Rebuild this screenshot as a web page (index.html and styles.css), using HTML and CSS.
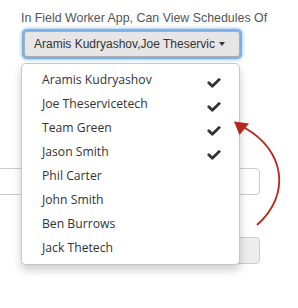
FILE: index.html
```html
<!DOCTYPE html>
<html lang="en">
<head>
    <meta charset="UTF-8">
    <title>Schedule Visibility</title>
    <link rel="stylesheet" href="styles.css">
</head>
<body>
    <div class="container">
        <div class="field-label">In Field Worker App, Can View Schedules Of</div>
        <div class="dropdown">
            <button class="btn" type="button">Aramis Kudryashov,Joe Theservic <span class="caret"></span></button>
            <ul class="dropdown-menu">
                <li>Aramis Kudryashov <svg class="check" width="14" height="10" viewBox="0 0 14 10"><polyline points="1.8,4.8 5.3,8.2 12.2,1.6"/></svg></li>
                <li>Joe Theservicetech <svg class="check" width="14" height="10" viewBox="0 0 14 10"><polyline points="1.8,4.8 5.3,8.2 12.2,1.6"/></svg></li>
                <li>Team Green <svg class="check" width="14" height="10" viewBox="0 0 14 10"><polyline points="1.8,4.8 5.3,8.2 12.2,1.6"/></svg></li>
                <li>Jason Smith <svg class="check" width="14" height="10" viewBox="0 0 14 10"><polyline points="1.8,4.8 5.3,8.2 12.2,1.6"/></svg></li>
                <li>Phil Carter</li>
                <li>John Smith</li>
                <li>Ben Burrows</li>
                <li>Jack Thetech</li>
            </ul>
        </div>
        <div class="fields">
            <input class="text-input" type="text">
            <input class="text-input disabled" type="text" disabled>
        </div>
    </div>

    <!-- hand drawn annotation arrow -->
    <svg class="annotation" width="298" height="308" viewBox="0 0 298 308">
        <path d="M257 225 C292 194, 284 150, 245 128" fill="none" stroke="#b8261b" stroke-width="1.8"/>
        <polygon points="234,121.5 249,123.5 239.5,135" fill="#b8261b"/>
    </svg>
</body>
</html>
```

FILE: styles.css
```css
body {
    margin: 0;
    background: #fff;
    font-family: "Liberation Sans", Arial, sans-serif;
    width: 298px;
    height: 308px;
    overflow: hidden;
}
.container {
    padding: 9px 0 0 21px;
}
.field-label {
    font-size: 12.4px;
    line-height: 18px;
    color: #555;
}
.dropdown {
    position: relative;
    padding-top: 4px;
}
.btn {
    display: block;
    margin-left: 3px;
    width: 216px;
    height: 26px;
    padding: 0 13px 0 9px;
    font-family: "Liberation Sans", Arial, sans-serif;
    font-size: 12px;
    color: #333;
    text-align: left;
    white-space: nowrap;
    background: #e6e6e6;
    border: 1px solid #adadad;
    border-radius: 3px;
    box-shadow: 0 0 0 2px #7cb1e8, 0 0 3px 3px rgba(110, 170, 235, 0.6);
}
.caret {
    display: inline-block;
    margin-left: 1px;
    vertical-align: 2px;
    border-top: 4px solid #333;
    border-left: 3.5px solid transparent;
    border-right: 3.5px solid transparent;
}
.dropdown-menu {
    position: absolute;
    top: 100%;
    left: 0;
    z-index: 10;
    width: 219px;
    box-sizing: border-box;
    margin: 6px 0 0;
    padding: 4px 18px 4px 20px;
    list-style: none;
    background: #fff;
    border: 1px solid rgba(0, 0, 0, 0.22);
    border-radius: 5px;
    box-shadow: 0 5px 10px rgba(0, 0, 0, 0.2);
    font-family: "Open Sans", sans-serif;
    font-size: 12.2px;
    line-height: 24px;
    color: #333;
}
.dropdown-menu li {
    display: flex;
    justify-content: space-between;
    align-items: center;
    height: 24px;
}
.check {
    margin-top: 5px;
}
.check polyline {
    fill: none;
    stroke: #333;
    stroke-width: 2.8;
    stroke-linecap: round;
    stroke-linejoin: round;
}
.fields {
    margin: 111px 0 0 -41px;
    display: flex;
    flex-direction: column;
    gap: 42px;
}
.text-input {
    width: 280px;
    height: 27px;
    box-sizing: border-box;
    border: 1px solid #ccc;
    border-radius: 4px;
    background: #fff;
}
.text-input.disabled {
    margin-left: 120px;
    width: 160px;
    background: #eee;
}
.annotation {
    position: absolute;
    top: 0;
    left: 0;
    z-index: 20;
    pointer-events: none;
}
```
